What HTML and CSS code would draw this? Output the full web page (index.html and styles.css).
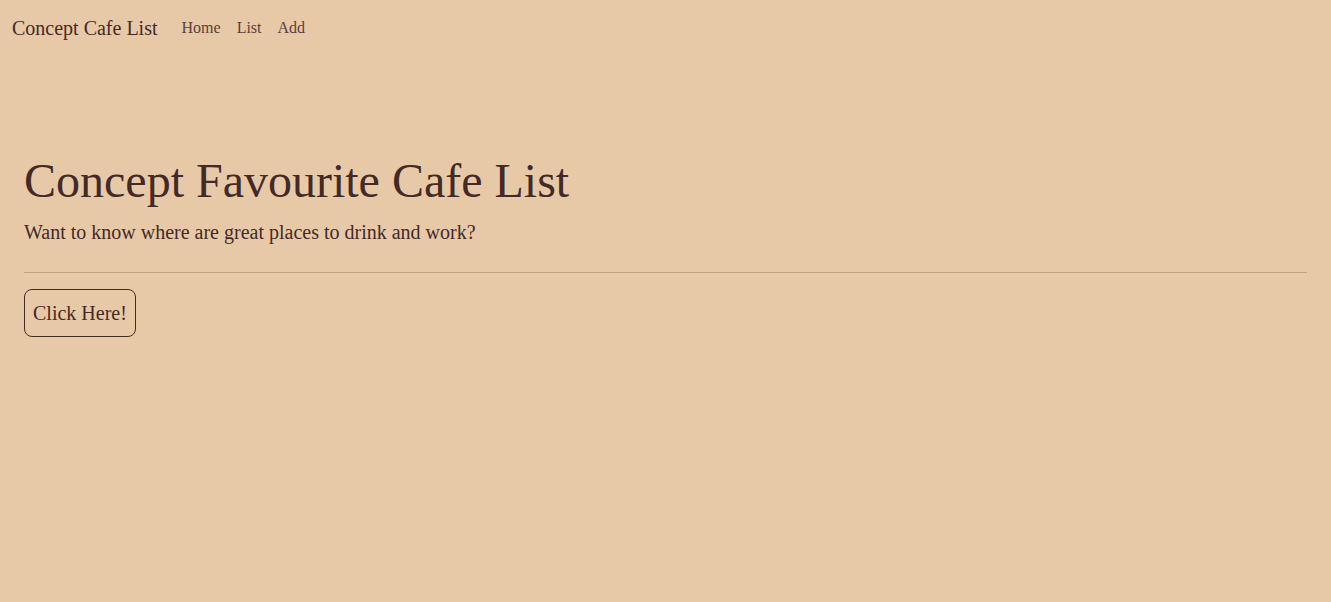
FILE: index.html
```html
<!DOCTYPE html>
<html lang="en">
<head>
<meta charset="utf-8">
<title>Concept Cafe List</title>
<link rel="stylesheet" href="styles.css">
</head>
<body>
<nav class="navbar">
  <a class="brand" href="#">Concept Cafe List</a>
  <ul class="nav">
    <li><a href="#">Home</a></li>
    <li><a href="#">List</a></li>
    <li><a href="#">Add</a></li>
  </ul>
</nav>
<main class="hero">
  <h1 class="title">Concept Favourite Cafe List</h1>
  <p class="lead">Want to know where are great places to drink and work?</p>
  <hr class="rule">
  <a class="btn" href="#">Click Here!</a>
</main>
</body>
</html>
```
FILE: styles.css
```css
html, body {
  margin: 0;
  padding: 0;
  background: #e8c9a7;
  color: #432a26;
  font-family: "Liberation Serif", "DejaVu Serif", serif;
}
a { color: inherit; text-decoration: none; }
.navbar {
  display: flex;
  align-items: center;
  height: 56px;
  padding: 0 12px;
}
.brand {
  font-size: 20px;
  margin-right: 16px;
}
.nav {
  display: flex;
  list-style: none;
  margin: 0;
  padding: 0;
}
.nav a {
  display: block;
  padding: 8px 8px;
  font-size: 16px;
  color: #5a3f3a;
}
.hero {
  padding: 96px 24px 0;
}
.title {
  margin: 0;
  font-size: 48px;
  font-weight: 400;
  line-height: 1.2;
}
.lead {
  margin: 11px 0 0;
  font-size: 20px;
}
.rule {
  border: 0;
  border-top: 1px solid #bfa183;
  margin: 28px 0 16px;
}
.btn {
  display: inline-block;
  border: 1px solid #432a26;
  border-radius: 8px;
  padding: 10px 8px;
  font-size: 20px;
  line-height: 1.3;
}
```
